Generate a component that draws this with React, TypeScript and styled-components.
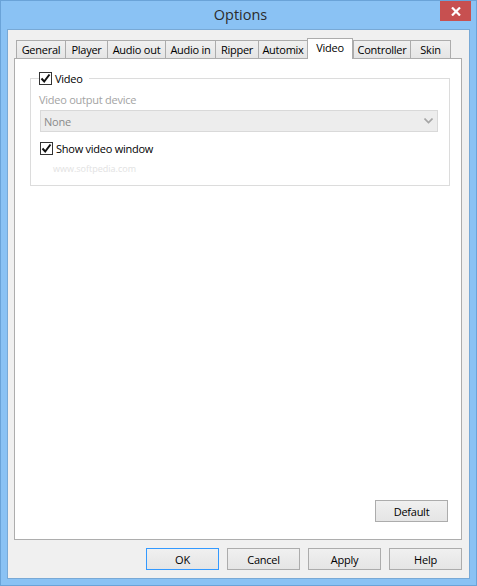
import React from "react";
import styled, { createGlobalStyle } from "styled-components";

const Global = createGlobalStyle`
  html, body { margin: 0; padding: 0; background: #88c0f2; }
  * { box-sizing: border-box; }
`;

const UI_FONT = `"Open Sans", "Noto Sans", sans-serif`;

const Window = styled.div`
  width: 477px;
  height: 586px;
  background: #8ac2f4;
  border: 1px solid #6aa3d8;
  display: flex;
  flex-direction: column;
  font-family: ${UI_FONT};
  font-size: 11px;
  letter-spacing: -0.25px;
  color: #000;
`;

const TitleBar = styled.div`
  height: 28px;
  display: grid;
  grid-template-columns: 1fr auto 1fr;
  align-items: start;
`;

const Title = styled.div`
  grid-column: 2;
  font-size: 14.5px;
  letter-spacing: 0;
  color: #2c2c2c;
  line-height: 28px;
  padding-left: 4px;
`;

const CloseButton = styled.div`
  grid-column: 3;
  justify-self: end;
  width: 31px;
  height: 20px;
  margin-right: 5px;
  background: #c75050;
  display: flex;
  align-items: center;
  justify-content: center;
`;

const Client = styled.div`
  flex: 1;
  margin: 0 6px 6px 6px;
  background: #f0f0f0;
  border: 1px solid #78a9d6;
  display: flex;
  flex-direction: column;
  padding: 8px 7px 8px 6px;
`;

const TabRow = styled.div`
  display: flex;
  align-items: flex-end;
  height: 21px;
  margin-left: 2px;
`;

const Tab = styled.div<{ $w: number; $active?: boolean; $last?: boolean }>`
  width: ${(p) => p.$w}px;
  height: ${(p) => (p.$active ? 21 : 18)}px;
  margin-bottom: ${(p) => (p.$active ? 0 : 1)}px;
  border: 1px solid #acacac;
  border-bottom: none;
  border-right: ${(p) => (p.$last || p.$active ? "1px solid #acacac" : "none")};
  background: ${(p) =>
    p.$active ? "#ffffff" : "linear-gradient(#f0f0f0, #e5e5e5)"};
  position: relative;
  z-index: ${(p) => (p.$active ? 2 : 0)};
  display: flex;
  justify-content: center;
  align-items: ${(p) => (p.$active ? "flex-start" : "center")};
  padding-top: ${(p) => (p.$active ? 1 : 0)}px;
  white-space: nowrap;
`;

const Panel = styled.div`
  flex: 1;
  margin-top: -1px;
  background: #fff;
  border: 1px solid #adadad;
  position: relative;
  z-index: 1;
  display: flex;
  flex-direction: column;
  padding: 11px 11px 17px 15px;
`;

const Group = styled.fieldset`
  margin: 0;
  border: 1px solid #dcdcdc;
  padding: 2px 11px 20px 8px;
  min-width: 0;
  height: 116px;
`;

const Legend = styled.legend`
  padding: 0 6px 0 0;
  display: flex;
  align-items: center;
  gap: 3px;
  height: 16px;
`;

const CheckRow = styled.div`
  display: flex;
  align-items: center;
  gap: 3px;
  height: 14px;
  margin-top: 9px;
  margin-left: 1px;
`;

const Box = styled.span`
  width: 13px;
  height: 13px;
  border: 1px solid #333;
  background: #fff;
  display: inline-flex;
  align-items: center;
  justify-content: center;
  flex-shrink: 0;
`;

const DisabledLabel = styled.div`
  color: #a3a3a3;
  margin-top: 4px;
  line-height: 16px;
`;

const Combo = styled.div`
  margin-top: 2px;
  margin-left: 1px;
  height: 22px;
  background: #ededed;
  border: 1px solid #d9d9d9;
  display: flex;
  align-items: center;
  justify-content: space-between;
  padding: 0 4px 0 3px;
  color: #8a8a8a;
`;

const Watermark = styled.div`
  margin-top: 7px;
  margin-left: 14px;
  color: #e2e2e2;
  font-size: 9px;
  letter-spacing: 0;
`;

const Spacer = styled.div`
  flex: 1;
`;

const Button = styled.div<{ $focus?: boolean }>`
  width: 73px;
  height: 22px;
  border: 1px solid ${(p) => (p.$focus ? "#3399ff" : "#acacac")};
  background: linear-gradient(#f0f0f0, #e5e5e5);
  display: flex;
  align-items: center;
  justify-content: center;
`;

const DefaultRow = styled.div`
  display: flex;
  justify-content: flex-end;
  padding-right: 2px;
`;

const ButtonRow = styled.div`
  display: flex;
  justify-content: flex-end;
  gap: 8px;
  margin-top: 8px;
`;

const Check = () => (
  <svg width="11" height="11" viewBox="0 0 11 11">
    <path d="M1.5 5.5 L4.2 8.5 L9.5 1.5" stroke="#111" strokeWidth="2" fill="none" />
  </svg>
);

const Chevron = () => (
  <svg width="9" height="6" viewBox="0 0 9 6">
    <path d="M0.5 0.5 L4.5 4.5 L8.5 0.5" stroke="#a6a6a6" strokeWidth="1.6" fill="none" />
  </svg>
);

const tabs: { label: string; w: number; active?: boolean }[] = [
  { label: "General", w: 49 },
  { label: "Player", w: 42 },
  { label: "Audio out", w: 58 },
  { label: "Audio in", w: 50 },
  { label: "Ripper", w: 43 },
  { label: "Automix", w: 49 },
  { label: "Video", w: 46, active: true },
  { label: "Controller", w: 57 },
  { label: "Skin", w: 41 },
];

export default function App() {
  return (
    <>
      <Global />
      <Window>
        <TitleBar>
          <Title>Options</Title>
          <CloseButton>
            <svg width="10" height="9" viewBox="0 0 10 9">
              <path d="M1 0.5 L9 8.5 M9 0.5 L1 8.5" stroke="#fff" strokeWidth="2.2" />
            </svg>
          </CloseButton>
        </TitleBar>
        <Client>
          <TabRow>
            {tabs.map((t, i) => (
              <Tab key={t.label} $w={t.w} $active={t.active} $last={i === tabs.length - 1}>
                {t.label}
              </Tab>
            ))}
          </TabRow>
          <Panel>
            <Group>
              <Legend>
                <Box>
                  <Check />
                </Box>
                Video
              </Legend>
              <DisabledLabel>Video output device</DisabledLabel>
              <Combo>
                <span>None</span>
                <Chevron />
              </Combo>
              <CheckRow>
                <Box>
                  <Check />
                </Box>
                Show video window
              </CheckRow>
              <Watermark>www.softpedia.com</Watermark>
            </Group>
            <Spacer />
            <DefaultRow>
              <Button>Default</Button>
            </DefaultRow>
          </Panel>
          <ButtonRow>
            <Button $focus>OK</Button>
            <Button>Cancel</Button>
            <Button>Apply</Button>
            <Button>Help</Button>
          </ButtonRow>
        </Client>
      </Window>
    </>
  );
}
